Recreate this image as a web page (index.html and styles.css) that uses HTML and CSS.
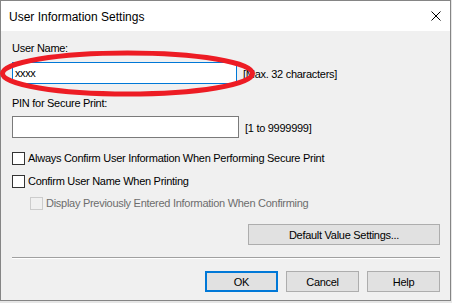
FILE: index.html
```html
<!DOCTYPE html>
<html lang="en">
<head>
    <meta charset="UTF-8">
    <title>User Information Settings</title>
    <link rel="stylesheet" href="styles.css">
</head>
<body>
    <div class="window">
        <div class="titlebar">
            <span class="title">User Information Settings</span>
            <span class="close">
                <svg width="10" height="10" viewBox="0 0 10 10">
                    <path d="M0.5 0.5 L9.5 9.5 M9.5 0.5 L0.5 9.5" stroke="#000" stroke-width="1" fill="none"/>
                </svg>
            </span>
        </div>
        <div class="content">
            <div class="label">User Name:</div>
            <div class="field-row field-first">
                <div class="textbox focused">xxxx</div>
                <span class="note">[Max. 32 characters]</span>
            </div>
            <div class="label label-pin">PIN for Secure Print:</div>
            <div class="field-row field-second">
                <div class="textbox"></div>
                <span class="note">[1 to 9999999]</span>
            </div>
            <div class="check check-first">
                <span class="box"></span>
                <span>Always Confirm User Information When Performing Secure Print</span>
            </div>
            <div class="check check-second">
                <span class="box"></span>
                <span>Confirm User Name When Printing</span>
            </div>
            <div class="check check-disabled">
                <span class="box"></span>
                <span>Display Previously Entered Information When Confirming</span>
            </div>
            <div class="default-row">
                <button class="btn btn-wide">Default Value Settings...</button>
            </div>
            <div class="separator"></div>
            <div class="button-row">
                <button class="btn btn-default">OK</button>
                <button class="btn">Cancel</button>
                <button class="btn">Help</button>
            </div>

            <!-- red highlight drawn over the user name field -->
            <svg class="highlight" width="256" height="48" viewBox="0 0 256 48">
                <ellipse cx="127.5" cy="23.5" rx="125" ry="20.5" fill="none" stroke="#ed1c24" stroke-width="5"/>
            </svg>
        </div>
    </div>
</body>
</html>
```

FILE: styles.css
```css
body {
    margin: 0;
    background-color: #e6e6e6;
    font-family: 'Liberation Sans', Arial, sans-serif;
    font-size: 11px;
    color: #000;
}

.window {
    width: 449px;
    height: 299px;
    border: 1px solid #858585;
    background-color: #f0f0f0;
    display: flex;
    flex-direction: column;
}

.titlebar {
    height: 30px;
    background-color: #fff;
    display: flex;
    align-items: center;
    justify-content: space-between;
    padding: 0 8px 0 8px;
}

.title {
    font-size: 12px;
    padding-top: 1px;
}

.close {
    display: flex;
    width: 10px;
    height: 10px;
    margin-right: 1px;
    margin-top: -1px;
}

.content {
    position: relative;
    flex: 1;
    display: flex;
    flex-direction: column;
    padding: 11px 10px 0 11px;
    letter-spacing: -0.28px;
}

.label {
    height: 13px;
    line-height: 13px;
}

.label-pin {
    margin-top: 13px;
}

.field-row {
    display: flex;
    align-items: center;
}

.field-first {
    margin-top: 7px;
}

.field-second {
    margin-top: 6px;
}

.textbox {
    width: 223px;
    height: 20px;
    line-height: 20px;
    border: 1px solid #7a7a7a;
    background-color: #fff;
    padding-left: 2px;
    box-sizing: content-box;
    letter-spacing: -0.4px;
}

.textbox.focused {
    border-color: #0078d7;
    width: 221px;
}

.note {
    margin-left: 6px;
    margin-top: 1px;
}

.check {
    display: flex;
    align-items: center;
    height: 13px;
    line-height: 13px;
}

.check-first {
    margin-top: 14px;
}

.check-second {
    margin-top: 10px;
}

.check-disabled {
    margin-top: 9px;
    padding-left: 18px;
    color: #6d6d6d;
}

.box {
    width: 11px;
    height: 11px;
    border: 1px solid #333;
    background-color: #fff;
    margin-right: 3px;
    flex-shrink: 0;
}

.check-disabled .box {
    border-color: #cccccc;
    background-color: #f0f0f0;
}

.default-row {
    display: flex;
    justify-content: flex-end;
    margin-top: 14px;
}

.btn {
    font-family: 'Liberation Sans', Arial, sans-serif;
    font-size: 11px;
    letter-spacing: -0.28px;
    color: #000;
    background-color: #e1e1e1;
    border: 1px solid #adadad;
    height: 21px;
    width: 73px;
    padding: 0;
    margin: 0;
}

.btn-wide {
    width: 192px;
}

.btn-default {
    border: 2px solid #0078d7;
}

.separator {
    margin-top: 12px;
    height: 1px;
    background-color: #a0a0a0;
    border-bottom: 1px solid #fff;
}

.button-row {
    display: flex;
    justify-content: flex-end;
    gap: 8px;
    margin-top: 12px;
}

.highlight {
    position: absolute;
    left: -1px;
    top: 19px;
}
```
